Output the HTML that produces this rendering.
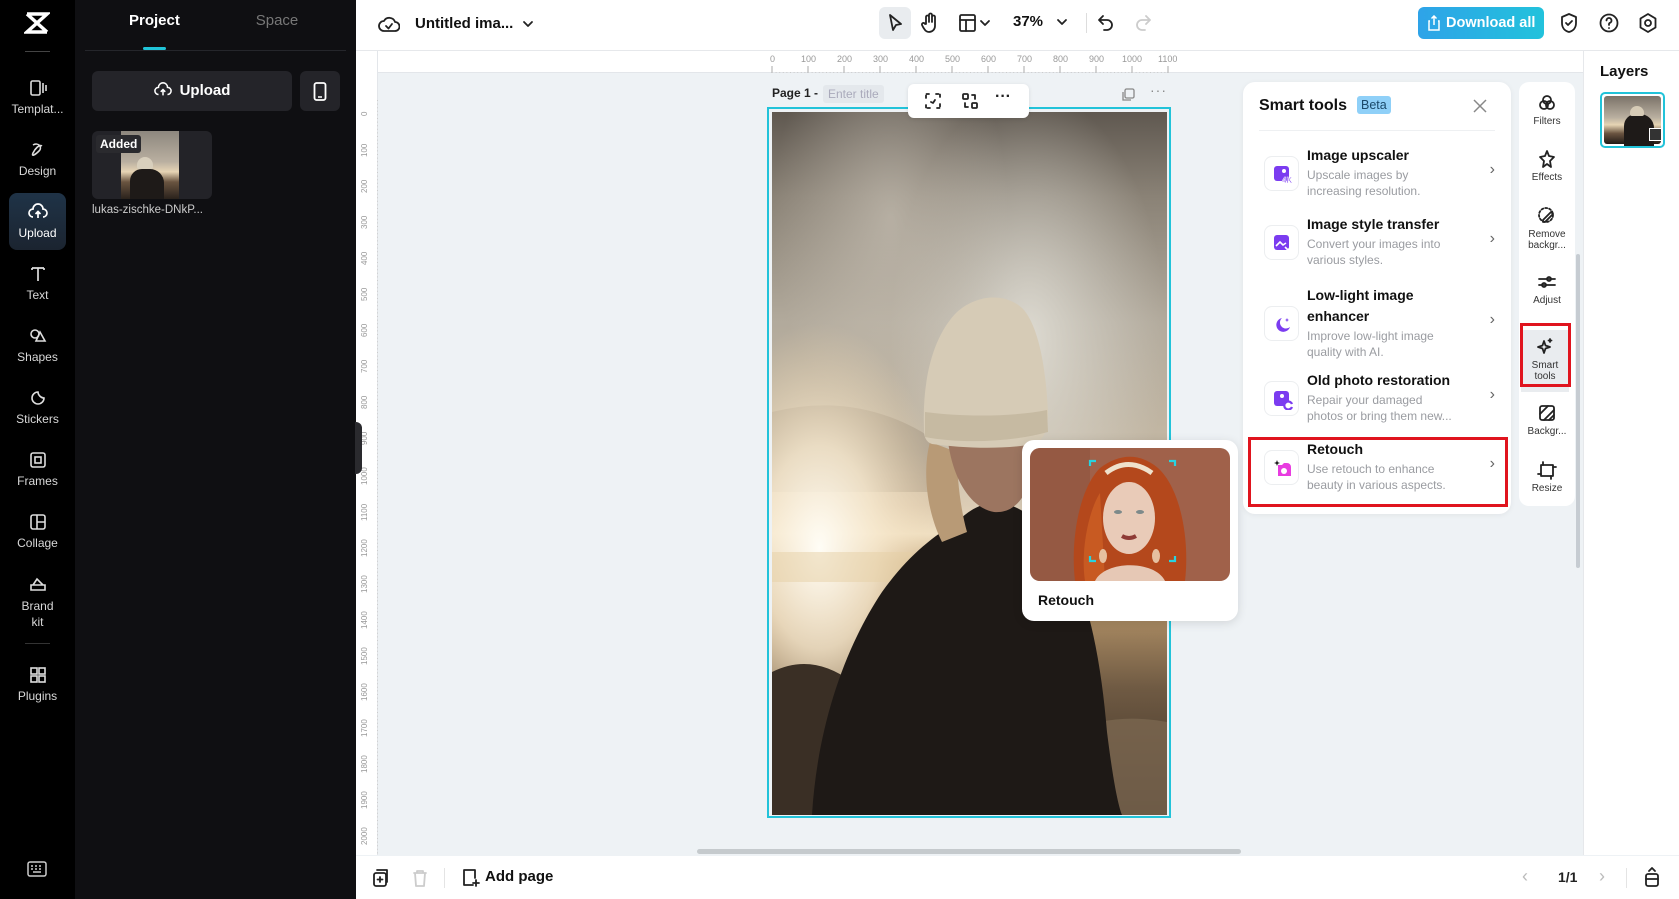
<!DOCTYPE html>
<html><head><meta charset="utf-8">
<style>
*{box-sizing:border-box;margin:0;padding:0}
body{width:1679px;height:899px;overflow:hidden;font-family:"Liberation Sans",sans-serif;background:#eef2f5;position:relative}
.a{position:absolute}
.lb{left:0;top:0;width:75px;height:899px;background:#000}
.li{position:absolute;left:0;width:75px;text-align:center;color:#d8d8d8;font-size:12px}
.li svg{display:block;margin:0 auto 4px}
.pn{left:75px;top:0;width:281px;height:899px;background:#0f0f12}
.top{left:356px;top:0;width:1323px;height:51px;background:#fff;border-bottom:1px solid #e6e8eb}
.ic{stroke:#222;fill:none;stroke-width:1.8;stroke-linecap:round;stroke-linejoin:round}
.st{left:1243px;top:82px;width:268px;height:432px;background:#fff;border-radius:12px;box-shadow:0 1px 6px rgba(0,0,0,.06)}
.it{position:absolute;left:16px;width:244px}
.it .bx{position:absolute;left:5px;width:35px;height:35px;border:1px solid #eceef0;border-radius:8px;background:#fff}
.it .t{position:absolute;left:48px;font-size:14px;font-weight:bold;color:#111;line-height:21px}
.it .d{position:absolute;left:48px;font-size:12px;color:#9a9ca1;line-height:16px}
.it .ch{position:absolute;right:8px;color:#666;font-size:16px}
.ts{left:1519px;top:82px;width:56px;height:424px;background:#fff;border-radius:10px}
.tl{position:absolute;left:0;width:56px;text-align:center;font-size:10px;color:#333;line-height:11px}
.tl svg{display:block;margin:0 auto 3px}
</style></head><body>

<div class="a lb">
 <svg class="a" style="left:24px;top:11px" width="26" height="24" viewBox="0 0 26 24"><path d="M3 3 L23 3 L3 21 L23 21 M3 3 L23 21" stroke="#fff" stroke-width="3.5" fill="none"/></svg>
 <div class="a" style="left:25px;top:51px;width:25px;height:1px;background:#444"></div>
 <div class="li" style="top:78px"><svg width="20" height="20" viewBox="0 0 20 20"><rect x="3" y="3" width="9" height="14" rx="1.5" stroke="#ddd" fill="none" stroke-width="1.6"/><path d="M15 5v10M18 7v6" stroke="#ddd" stroke-width="1.6"/></svg>Templat...</div>
 <div class="li" style="top:140px"><svg width="20" height="20" viewBox="0 0 20 20"><path d="M5 5c5-3 10 2 6 6s-8 6-6 2 6-9 9-7" stroke="#ddd" fill="none" stroke-width="1.6"/></svg>Design</div>
 <div class="a" style="left:9px;top:193px;width:57px;height:57px;border-radius:8px;background:linear-gradient(180deg,#1f3347,#1b2430)"></div>
 <div class="li" style="top:202px;color:#fff"><svg width="20" height="20" viewBox="0 0 20 20"><path d="M5 15a4 4 0 0 1 0-8 5 5 0 0 1 10 0 4 4 0 0 1 0 8M10 16v-6M7.5 12l2.5-2.5 2.5 2.5" stroke="#fff" fill="none" stroke-width="1.7"/></svg>Upload</div>
 <div class="li" style="top:264px"><svg width="20" height="20" viewBox="0 0 20 20"><path d="M4 4h12M10 4v13M4 4v2M16 4v2" stroke="#ddd" stroke-width="1.7" fill="none"/></svg>Text</div>
 <div class="li" style="top:326px"><svg width="20" height="20" viewBox="0 0 20 20"><circle cx="7" cy="8" r="4" stroke="#ddd" fill="none" stroke-width="1.6"/><path d="M12 6l5 9H8z" stroke="#ddd" fill="none" stroke-width="1.6"/></svg>Shapes</div>
 <div class="li" style="top:388px"><svg width="20" height="20" viewBox="0 0 20 20"><path d="M16 10a6 6 0 1 1-6-6c0 3 3 6 6 6z" stroke="#ddd" fill="none" stroke-width="1.6"/></svg>Stickers</div>
 <div class="li" style="top:450px"><svg width="20" height="20" viewBox="0 0 20 20"><rect x="3" y="3" width="14" height="14" rx="2" stroke="#ddd" fill="none" stroke-width="1.6"/><rect x="7" y="7" width="6" height="6" stroke="#ddd" fill="none" stroke-width="1.6"/></svg>Frames</div>
 <div class="li" style="top:512px"><svg width="20" height="20" viewBox="0 0 20 20"><rect x="3" y="3" width="14" height="14" rx="2" stroke="#ddd" fill="none" stroke-width="1.6"/><path d="M9 3v14M9 10h8" stroke="#ddd" stroke-width="1.6"/></svg>Collage</div>
 <div class="li" style="top:574px;line-height:16px"><svg width="20" height="20" viewBox="0 0 20 20"><path d="M3 11h14v5H3zM5 11l4-6 6 6" stroke="#ddd" fill="none" stroke-width="1.6"/></svg>Brand<br>kit</div>
 <div class="a" style="left:25px;top:643px;width:25px;height:1px;background:#333"></div>
 <div class="li" style="top:665px"><svg width="20" height="20" viewBox="0 0 20 20"><rect x="3" y="3" width="6" height="6" stroke="#ddd" fill="none" stroke-width="1.6"/><rect x="11" y="3" width="6" height="6" stroke="#ddd" fill="none" stroke-width="1.6"/><rect x="3" y="11" width="6" height="6" stroke="#ddd" fill="none" stroke-width="1.6"/><rect x="11" y="11" width="6" height="6" stroke="#ddd" fill="none" stroke-width="1.6"/></svg>Plugins</div>
 <svg class="a" style="left:27px;top:861px" width="20" height="16" viewBox="0 0 20 16"><rect x="1" y="1" width="18" height="14" rx="2" stroke="#ccc" fill="none" stroke-width="1.5"/><path d="M4 5h2M8 5h2M12 5h2M4 8h2M8 8h2M12 8h2M6 11h8" stroke="#ccc" stroke-width="1.5"/></svg>
</div>

<div class="a pn">
 <div class="a" style="left:54px;top:12px;width:50px;text-align:center;color:#fff;font-weight:bold;font-size:15px">Project</div>
 <div class="a" style="left:177px;top:12px;width:50px;text-align:center;color:#777;font-size:15px">Space</div>
 <div class="a" style="left:68px;top:47px;width:23px;height:3px;background:#20c4d8;border-radius:2px"></div>
 <div class="a" style="left:10px;top:50px;width:261px;height:1px;background:#25262b"></div>
 <div class="a" style="left:17px;top:71px;width:200px;height:40px;background:#242429;border-radius:6px;color:#fff;font-size:15px;font-weight:bold;text-align:center;line-height:40px"><svg style="vertical-align:-4px;margin-right:8px" width="18" height="18" viewBox="0 0 20 20"><path d="M5 15a4 4 0 0 1 0-8 5 5 0 0 1 10 0 4 4 0 0 1 0 8M10 16v-6M7.5 12l2.5-2.5 2.5 2.5" stroke="#fff" fill="none" stroke-width="1.7"/></svg>Upload</div>
 <div class="a" style="left:225px;top:71px;width:40px;height:40px;background:#242429;border-radius:6px"><svg class="a" style="left:13px;top:11px" width="14" height="19" viewBox="0 0 14 19"><rect x="1.5" y="1" width="11" height="17" rx="2" stroke="#fff" fill="none" stroke-width="1.8"/><path d="M5 15h4" stroke="#fff" stroke-width="1.5"/></svg></div>
 <div class="a" style="left:17px;top:131px;width:120px;height:68px;background:#232328;border-radius:6px;overflow:hidden">
  <div class="a" style="left:29px;top:0;width:58px;height:68px;background:linear-gradient(180deg,#8d877e 0%,#b9afa0 45%,#e6d4b4 60%,#6a5440 75%,#2a221c 100%)"></div>
  <div class="a" style="left:45px;top:26px;width:16px;height:12px;background:#d8cfbc;border-radius:8px 8px 2px 2px"></div>
  <div class="a" style="left:38px;top:38px;width:34px;height:30px;background:#1e1a18;border-radius:12px 14px 0 0"></div>
  <div class="a" style="left:4px;top:4px;background:#2a2a2e;color:#fff;font-size:12px;font-weight:bold;padding:2px 4px;border-radius:3px">Added</div>
 </div>
 <div class="a" style="left:17px;top:204px;color:#ccc;font-size:11.5px">lukas-zischke-DNkP...</div>
</div>

<div class="a top">
 <svg class="a" style="left:22px;top:14px" width="22" height="20" viewBox="0 0 22 20"><path d="M6 17a5 5 0 0 1 0-10 6 6 0 0 1 11 1 4.5 4.5 0 0 1 0 9z" class="ic"/><path d="M8 12l2.5 2.5L14 10" class="ic"/></svg>
 <div class="a" style="left:59px;top:15px;font-size:15px;font-weight:bold;color:#111">Untitled ima...</div>
 <svg class="a" style="left:166px;top:19px" width="12" height="10" viewBox="0 0 12 10"><path d="M2 3l4 4 4-4" class="ic"/></svg>
 <div class="a" style="left:523px;top:7px;width:32px;height:32px;background:#e9ecef;border-radius:6px"></div>
 <svg class="a" style="left:530px;top:13px" width="18" height="20" viewBox="0 0 18 20"><path d="M4 2l11 9-5 1-3 5z" class="ic"/></svg>
 <svg class="a" style="left:564px;top:12px" width="20" height="22" viewBox="0 0 20 22"><path d="M6 12V5a1.5 1.5 0 0 1 3 0v5V3a1.5 1.5 0 0 1 3 0v7V5a1.5 1.5 0 0 1 3 0v9a6 6 0 0 1-6 6c-3 0-4-2-6-5l-1-2a1.5 1.5 0 0 1 3-1z" class="ic"/></svg>
 <svg class="a" style="left:602px;top:13px" width="36" height="20" viewBox="0 0 36 20"><rect x="2" y="2" width="15" height="16" rx="1.5" class="ic"/><path d="M2 7h15M8 7v11M23 8l4 4 4-4" class="ic"/></svg>
 <div class="a" style="left:657px;top:13px;font-size:15px;font-weight:bold;color:#111">37%</div>
 <svg class="a" style="left:700px;top:17px" width="12" height="10" viewBox="0 0 12 10"><path d="M2 3l4 4 4-4" class="ic"/></svg>
 <div class="a" style="left:730px;top:13px;width:1px;height:20px;background:#ddd"></div>
 <svg class="a" style="left:741px;top:13px" width="18" height="20" viewBox="0 0 18 20"><path d="M6 3L2 7l4 4M2 7h8a5 5 0 0 1 0 10H7" class="ic"/></svg>
 <svg class="a" style="left:778px;top:13px" width="18" height="20" viewBox="0 0 18 20"><path d="M12 3l4 4-4 4M16 7H8a5 5 0 0 0 0 10h3" class="ic" style="stroke:#ccc"/></svg>
 <div class="a" style="left:1062px;top:7px;width:126px;height:32px;border-radius:6px;background:linear-gradient(90deg,#2ea3e8,#22c2dc);color:#fff;font-size:14.5px;font-weight:bold;line-height:32px;padding-left:28px">Download all</div>
 <svg class="a" style="left:1071px;top:15px" width="14" height="16" viewBox="0 0 14 16"><path d="M3 6H2v9h10V6h-1M7 10V1M4.5 3.5L7 1l2.5 2.5" stroke="#fff" fill="none" stroke-width="1.5"/></svg>
 <svg class="a" style="left:1203px;top:12px" width="20" height="22" viewBox="0 0 20 22"><path d="M10 2l7 3v6c0 5-3 8-7 9-4-1-7-4-7-9V5z M7 11l2 2 4-4" class="ic"/></svg>
 <svg class="a" style="left:1242px;top:12px" width="22" height="22" viewBox="0 0 22 22"><circle cx="11" cy="11" r="8.5" class="ic"/><path d="M8.5 8.5a2.5 2.5 0 1 1 3.5 2.3c-.7.3-1 .8-1 1.5V13M11 16v.1" class="ic"/></svg>
 <svg class="a" style="left:1281px;top:12px" width="22" height="22" viewBox="0 0 22 22"><path d="M11 2l7.5 4.5v9L11 20l-7.5-4.5v-9z" class="ic"/><circle cx="11" cy="11" r="3" class="ic"/></svg>
</div>

<div class="a" style="left:356px;top:51px;width:1227px;height:22px;background:#fff;border-bottom:1px solid #e3e6ea"></div>
<svg class="a" style="left:770px;top:51px" width="420" height="22" viewBox="0 0 420 22" font-size="9" fill="#999" font-family="Liberation Sans">
 <g>
 <text x="0" y="11">0</text><text x="31" y="11">100</text><text x="67" y="11">200</text><text x="103" y="11">300</text><text x="139" y="11">400</text><text x="175" y="11">500</text><text x="211" y="11">600</text><text x="247" y="11">700</text><text x="283" y="11">800</text><text x="319" y="11">900</text><text x="352" y="11">1000</text><text x="388" y="11">1100</text>
 </g>
 <path d="M2 15v7 M38 15v7 M74 15v7 M110 15v7 M146 15v7 M182 15v7 M218 15v7 M254 15v7 M290 15v7 M326 15v7 M362 15v7 M398 15v7" stroke="#aaa"/>
 <path d="M2 21.5H400" stroke="#ccc" stroke-dasharray="1 2.6"/>
</svg>
<div class="a" style="left:356px;top:51px;width:22px;height:804px;background:#fff;border-right:1px solid #e3e6ea"></div>
<svg class="a" style="left:356px;top:100px" width="22" height="755" font-size="8" fill="#999" font-family="Liberation Sans">
 <g>
 <text transform="translate(11,16) rotate(-90)">0</text><text transform="translate(11,57) rotate(-90)">100</text><text transform="translate(11,93) rotate(-90)">200</text><text transform="translate(11,129) rotate(-90)">300</text><text transform="translate(11,165) rotate(-90)">400</text><text transform="translate(11,201) rotate(-90)">500</text><text transform="translate(11,237) rotate(-90)">600</text><text transform="translate(11,273) rotate(-90)">700</text><text transform="translate(11,309) rotate(-90)">800</text><text transform="translate(11,345) rotate(-90)">900</text><text transform="translate(11,385) rotate(-90)">1000</text><text transform="translate(11,421) rotate(-90)">1100</text><text transform="translate(11,457) rotate(-90)">1200</text><text transform="translate(11,493) rotate(-90)">1300</text><text transform="translate(11,529) rotate(-90)">1400</text><text transform="translate(11,565) rotate(-90)">1500</text><text transform="translate(11,601) rotate(-90)">1600</text><text transform="translate(11,637) rotate(-90)">1700</text><text transform="translate(11,673) rotate(-90)">1800</text><text transform="translate(11,709) rotate(-90)">1900</text><text transform="translate(11,745) rotate(-90)">2000</text>
 </g>
 <path d="M21.5 0V755" stroke="#ccc" stroke-dasharray="1 2.6"/>
</svg>
<div class="a" style="left:355px;top:422px;width:7px;height:52px;background:#2a2a2e;border-radius:0 6px 6px 0"></div>

<div class="a" style="left:772px;top:86px;font-size:12px;color:#222;font-weight:bold">Page 1 -</div>
<div class="a" style="left:823px;top:85px;padding:2px 5px;font-size:12px;color:#aab;background:#e4e8ec;border-radius:3px">Enter title</div>
<svg class="a" style="left:1120px;top:87px" width="16" height="16" viewBox="0 0 16 16"><rect x="5" y="2" width="9" height="9" rx="1.5" stroke="#888" fill="none" stroke-width="1.3"/><path d="M3 5v8h8" stroke="#888" fill="none" stroke-width="1.3"/></svg>
<div class="a" style="left:1150px;top:82px;font-size:14px;color:#888;letter-spacing:1px">···</div>

<div class="a" style="left:767px;top:107px;width:404px;height:711px;border:2px solid #22c3d9"></div>
<svg class="a" style="left:772px;top:112px" width="395" height="703" viewBox="0 0 395 703">
 <defs>
  <linearGradient id="sky" x1="0" y1="0" x2="0" y2="1">
   <stop offset="0" stop-color="#5f5850"/><stop offset=".12" stop-color="#8a8276"/><stop offset=".3" stop-color="#b2aa9c"/><stop offset=".48" stop-color="#c4b8a4"/><stop offset=".56" stop-color="#dccab0"/><stop offset=".6" stop-color="#efe0c4"/><stop offset=".64" stop-color="#c9ad86"/><stop offset=".72" stop-color="#a98a62"/><stop offset=".82" stop-color="#6f5a43"/><stop offset="1" stop-color="#3a2e24"/>
  </linearGradient>
  <radialGradient id="sun" cx=".12" cy=".62" r=".32"><stop offset="0" stop-color="#fffdf6"/><stop offset=".45" stop-color="#f8ead0" stop-opacity=".8"/><stop offset="1" stop-color="#f0d8b0" stop-opacity="0"/></radialGradient>
  <radialGradient id="cl" cx=".65" cy=".32" r=".35"><stop offset="0" stop-color="#e4e2da" stop-opacity=".85"/><stop offset="1" stop-color="#d8d6ce" stop-opacity="0"/></radialGradient>
  <radialGradient id="cl2" cx=".3" cy=".15" r=".3"><stop offset="0" stop-color="#cfc8bc" stop-opacity=".6"/><stop offset="1" stop-color="#cfc8bc" stop-opacity="0"/></radialGradient>
 </defs>
 <rect width="395" height="703" fill="url(#sky)"/>
 <rect width="395" height="703" fill="url(#cl)"/>
 <rect width="395" height="703" fill="url(#cl2)"/>
 <path d="M0 300 Q80 280 150 320 Q180 340 160 380 L0 380Z" fill="#8e8070" opacity=".35"/>
 <rect width="395" height="703" fill="url(#sun)"/>
 <path d="M0 440 L140 440 L140 470 L0 470Z" fill="#e6cfa6" opacity=".5"/>
 <path d="M0 560 Q40 540 80 570 Q110 590 120 620 L110 703 L0 703Z" fill="#3a2f25"/>
 <path d="M300 620 Q340 600 395 610 L395 703 L300 703Z" fill="#7a6650" opacity=".8"/>
 <!-- coat -->
 <path d="M40 703 C45 620 70 540 110 480 C135 445 160 425 185 410 C200 395 215 388 235 392 C260 400 280 420 300 455 C320 500 330 560 335 620 C340 660 345 690 350 703Z" fill="#1e1916"/>
 <!-- hair -->
 <path d="M158 330 C150 360 155 400 170 430 L195 420 C188 395 185 365 185 340Z" fill="#b89a76"/>
 <!-- face -->
 <path d="M175 320 C178 360 195 395 222 400 C245 402 258 380 262 350 L265 318Z" fill="#9c7560"/>
 <!-- hat -->
 <path d="M152 318 C150 270 160 225 185 200 C205 182 235 180 252 198 C268 218 274 260 276 300 C276 320 270 330 262 332 C230 338 190 336 160 332 C154 330 152 325 152 318Z" fill="#d6cbb6"/>
 <path d="M153 300 C190 305 240 305 275 298 L276 320 C240 330 190 332 153 325Z" fill="#c6baa2"/>
</svg>

<div class="a" style="left:908px;top:84px;width:121px;height:34px;background:#fff;border-radius:6px;box-shadow:0 1px 4px rgba(0,0,0,.1)"></div>
<svg class="a" style="left:924px;top:92px" width="18" height="18" viewBox="0 0 18 18"><path d="M2 6V2h4M12 2h4v4M16 12v4h-4M6 16H2v-4" class="ic" stroke-dasharray="2.5 2"/><path d="M7 10l2 1 2-3" class="ic" stroke-width="1.2"/></svg>
<svg class="a" style="left:961px;top:92px" width="18" height="18" viewBox="0 0 18 18"><rect x="2" y="2" width="5" height="5" rx="1" class="ic"/><rect x="11" y="11" width="5" height="5" rx="1" class="ic"/><path d="M11 3h3v4M7 15H4v-4" class="ic"/></svg>
<div class="a" style="left:995px;top:88px;font-size:16px;font-weight:bold;color:#222">···</div>

<div class="a" style="left:1022px;top:440px;width:216px;height:181px;background:#fff;border-radius:12px;box-shadow:0 2px 10px rgba(0,0,0,.12)">
 <svg class="a" style="left:8px;top:8px;border-radius:10px" width="200" height="133" viewBox="0 0 200 133">
  <rect width="200" height="133" fill="#a0614a"/>
  <rect x="0" y="0" width="60" height="133" fill="#8e5340" opacity=".6"/>
  <path d="M45 133 C40 90 50 40 70 20 C90 5 110 5 128 20 C150 40 160 90 155 133Z" fill="#b4481c"/>
  <path d="M55 133 C50 100 60 60 70 45 L75 133Z" fill="#c85a22"/>
  <ellipse cx="99" cy="70" rx="26" ry="36" fill="#e9cbb8"/>
  <path d="M65 133 C75 112 125 112 135 133Z" fill="#e6c8b5"/>
  <path d="M76 25 Q98 8 122 25" stroke="#efe1cc" stroke-width="5" fill="none"/>
  <path d="M60 18v-5h6M139 13h6v5M60 108v5h6M139 113h6v-5" stroke="#27d3e0" stroke-width="2.2" fill="none"/>
  <ellipse cx="88" cy="64" rx="4" ry="2" fill="#7d8a8a"/><ellipse cx="110" cy="64" rx="4" ry="2" fill="#7d8a8a"/>
  <path d="M92 88 Q99 92 106 88" stroke="#8e3b36" stroke-width="4" fill="none"/>
  <ellipse cx="73" cy="108" rx="4" ry="7" fill="#e6c0a0"/><ellipse cx="126" cy="108" rx="4" ry="7" fill="#e6c0a0"/>
 </svg>
 <div class="a" style="left:16px;top:152px;font-size:14px;font-weight:bold;color:#111">Retouch</div>
</div>

<div class="a st">
 <div class="a" style="left:16px;top:15px;font-size:16px;font-weight:bold;color:#111">Smart tools</div>
 <div class="a" style="left:114px;top:14px;background:#8fd0f8;color:#1b4a6a;font-size:12.5px;padding:2px 4px;border-radius:3px">Beta</div>
 <svg class="a" style="left:229px;top:16px" width="16" height="16" viewBox="0 0 16 16"><path d="M2 2l12 12M14 2L2 14" stroke="#888" stroke-width="1.5"/></svg>
 <div class="a" style="left:16px;top:48px;width:236px;height:1px;background:#eef0f2"></div>

 <div class="it" style="top:63px;height:56px">
  <div class="bx" style="top:11px"><svg class="a" style="left:8px;top:8px" width="20" height="20" viewBox="0 0 20 20"><rect x="1" y="1" width="15" height="15" rx="3" fill="#7b3cf0"/><circle cx="11" cy="6" r="2" fill="#fff"/><text x="9" y="18" font-size="8" font-weight="bold" fill="#7b3cf0" stroke="#fff" stroke-width=".5" font-family="Liberation Sans">4K</text></svg></div>
  <div class="t" style="top:0">Image upscaler</div>
  <div class="d" style="top:22px">Upscale images by<br>increasing resolution.</div>
  <div class="ch" style="top:16px">›</div>
 </div>
 <div class="it" style="top:132px;height:56px">
  <div class="bx" style="top:11px"><svg class="a" style="left:8px;top:8px" width="20" height="20" viewBox="0 0 20 20"><rect x="1" y="1" width="15" height="15" rx="3" fill="#7b3cf0"/><path d="M3 12l4-4 3 3 3-2M12 13l3 3 3-3" stroke="#fff" stroke-width="1.6" fill="none"/></svg></div>
  <div class="t" style="top:0">Image style transfer</div>
  <div class="d" style="top:22px">Convert your images into<br>various styles.</div>
  <div class="ch" style="top:16px">›</div>
 </div>
 <div class="it" style="top:203px;height:76px">
  <div class="bx" style="top:21px"><svg class="a" style="left:8px;top:8px" width="20" height="20" viewBox="0 0 20 20"><path d="M9 3a7 7 0 1 0 8 9 6 6 0 0 1-8-9z" fill="#7b3cf0"/><path d="M14 3l.7 1.5L16 5l-1.3.5L14 7l-.7-1.5L12 5l1.3-.5z" fill="#7b3cf0"/></svg></div>
  <div class="t" style="top:0">Low-light image<br>enhancer</div>
  <div class="d" style="top:43px">Improve low-light image<br>quality with AI.</div>
  <div class="ch" style="top:26px">›</div>
 </div>
 <div class="it" style="top:288px;height:56px">
  <div class="bx" style="top:11px"><svg class="a" style="left:8px;top:8px" width="20" height="20" viewBox="0 0 20 20"><rect x="1" y="1" width="15" height="15" rx="3" fill="#7b3cf0"/><circle cx="9" cy="6" r="2" fill="#fff"/><path d="M19 14a4 4 0 1 0 0 3" stroke="#7b3cf0" stroke-width="2.2" fill="#fff"/></svg></div>
  <div class="t" style="top:0">Old photo restoration</div>
  <div class="d" style="top:22px">Repair your damaged<br>photos or bring them new...</div>
  <div class="ch" style="top:16px">›</div>
 </div>
 <div class="it" style="top:357px;height:56px">
  <div class="bx" style="top:11px"><svg class="a" style="left:8px;top:8px" width="20" height="20" viewBox="0 0 20 20"><path d="M5 6h4l2-2h3a4 4 0 0 1 4 4v9H5z" fill="#e83ce0"/><circle cx="11" cy="12" r="3" fill="#fff"/><path d="M4 1l.8 2.2L7 4l-2.2.8L4 7l-.8-2.2L1 4l2.2-.8z" fill="#111"/></svg></div>
  <div class="t" style="top:0">Retouch</div>
  <div class="d" style="top:22px">Use retouch to enhance<br>beauty in various aspects.</div>
  <div class="ch" style="top:16px">›</div>
 </div>
</div>
<div class="a" style="left:1248px;top:437px;width:260px;height:70px;border:3px solid #e0141e"></div>

<div class="a ts">
 <div class="tl" style="top:11px"><svg width="20" height="20" viewBox="0 0 20 20"><circle cx="10" cy="7" r="4" class="ic" stroke-width="1.5"/><circle cx="7" cy="12" r="4" class="ic" stroke-width="1.5"/><circle cx="13" cy="12" r="4" class="ic" stroke-width="1.5"/></svg>Filters</div>
 <div class="tl" style="top:67px"><svg width="20" height="20" viewBox="0 0 20 20"><path d="M10 2l2 5 5 1-4 4 1 6-4-3-4 3 1-6-4-4 5-1z" class="ic" stroke-width="1.5"/></svg>Effects</div>
 <div class="tl" style="top:124px"><svg width="20" height="20" viewBox="0 0 20 20"><path d="M6 14l8-8 2 2-8 8H6z" class="ic" stroke-width="1.5"/><circle cx="9" cy="9" r="7" class="ic" stroke-width="1.2" stroke-dasharray="2 2"/></svg>Remove<br>backgr...</div>
 <div class="tl" style="top:190px"><svg width="20" height="20" viewBox="0 0 20 20"><path d="M2 7h16M2 13h16" class="ic" stroke-width="1.5"/><circle cx="12" cy="7" r="2" fill="#fff" class="ic" stroke-width="1.5"/><circle cx="7" cy="13" r="2" fill="#fff" class="ic" stroke-width="1.5"/></svg>Adjust</div>
 <div class="tl" style="top:248px;background:#e9ecef;left:2px;width:48px;height:62px;padding-top:7px"><svg width="20" height="20" viewBox="0 0 20 20"><path d="M9 4l1.5 4.5L15 10l-4.5 1.5L9 16l-1.5-4.5L3 10l4.5-1.5z" class="ic" stroke-width="1.6"/><path d="M15 2v3M13.5 3.5h3" class="ic" stroke-width="1.4"/></svg>Smart<br>tools</div>
 <div class="tl" style="top:321px"><svg width="20" height="20" viewBox="0 0 20 20"><rect x="3" y="3" width="14" height="14" rx="2" class="ic" stroke-width="1.5"/><path d="M3 11l8-8M7 17l10-10M12 17l5-5" class="ic" stroke-width="1.2"/></svg>Backgr...</div>
 <div class="tl" style="top:378px"><svg width="20" height="20" viewBox="0 0 20 20"><rect x="4" y="5" width="12" height="11" class="ic" stroke-width="1.5"/><path d="M6 2v3M14 16v3M16 7h3M1 14h3" class="ic" stroke-width="1.5"/></svg>Resize</div>
</div>
<div class="a" style="left:1520px;top:323px;width:51px;height:64px;border:3px solid #e0141e"></div>
<div class="a" style="left:1576px;top:254px;width:4px;height:314px;background:#c6ccd2;border-radius:2px"></div>

<div class="a" style="left:1583px;top:51px;width:96px;height:804px;background:#fff;border-left:1px solid #e6e8eb">
 <div class="a" style="left:16px;top:12px;font-size:15px;font-weight:bold;color:#111">Layers</div>
 <div class="a" style="left:16px;top:41px;width:65px;height:56px;border:2px solid #22c3d9;border-radius:5px;padding:2px">
  <div style="width:100%;height:100%;border-radius:3px;background:linear-gradient(180deg,#7a7268,#b9afa0 45%,#e6d4b4 60%,#6a5440 78%,#201a16)"></div>
  <div class="a" style="left:22px;top:20px;width:30px;height:32px;background:#1e1a18;border-radius:12px 14px 0 0"></div>
  <div class="a" style="left:28px;top:12px;width:14px;height:10px;background:#d6cbb6;border-radius:7px 7px 2px 2px"></div>
  <div class="a" style="left:47px;top:34px;width:13px;height:13px;border:1.5px solid #fff;background:#333"></div>
 </div>
</div>

<div class="a" style="left:697px;top:849px;width:544px;height:5px;background:#c5cacd;border-radius:3px"></div>
<div class="a" style="left:356px;top:856px;width:1323px;height:43px;background:#fff">
 <svg class="a" style="left:16px;top:12px" width="18" height="20" viewBox="0 0 18 20"><rect x="2" y="5" width="12" height="13" rx="2" class="ic"/><path d="M5 2h10v12M8 9v5M5.5 11.5h5" class="ic"/></svg>
 <svg class="a" style="left:56px;top:12px" width="16" height="20" viewBox="0 0 16 20"><path d="M2 5h12M5 5V3h6v2M3 5l1 13h8l1-13" class="ic" style="stroke:#ccc"/></svg>
 <div class="a" style="left:88px;top:12px;width:1px;height:20px;background:#e4e4e4"></div>
 <svg class="a" style="left:105px;top:12px" width="20" height="20" viewBox="0 0 20 20"><path d="M12 17H3V2h11v8" class="ic"/><path d="M15 12v6M12 15h6" class="ic"/></svg>
 <div class="a" style="left:129px;top:12px;font-size:15px;font-weight:bold;color:#111">Add page</div>
 <div class="a" style="left:1166px;top:10px;font-size:18px;color:#bbb">‹</div>
 <div class="a" style="left:1202px;top:13px;font-size:14px;font-weight:bold;color:#222">1/1</div>
 <div class="a" style="left:1243px;top:10px;font-size:18px;color:#bbb">›</div>
 <div class="a" style="left:1270px;top:12px;width:1px;height:20px;background:#e4e4e4"></div>
 <svg class="a" style="left:1287px;top:10px" width="18" height="22" viewBox="0 0 18 22"><rect x="3" y="8" width="12" height="12" rx="2" class="ic"/><path d="M3 13h12M6 5l3-3 3 3" class="ic"/></svg>
</div>
</body></html>
